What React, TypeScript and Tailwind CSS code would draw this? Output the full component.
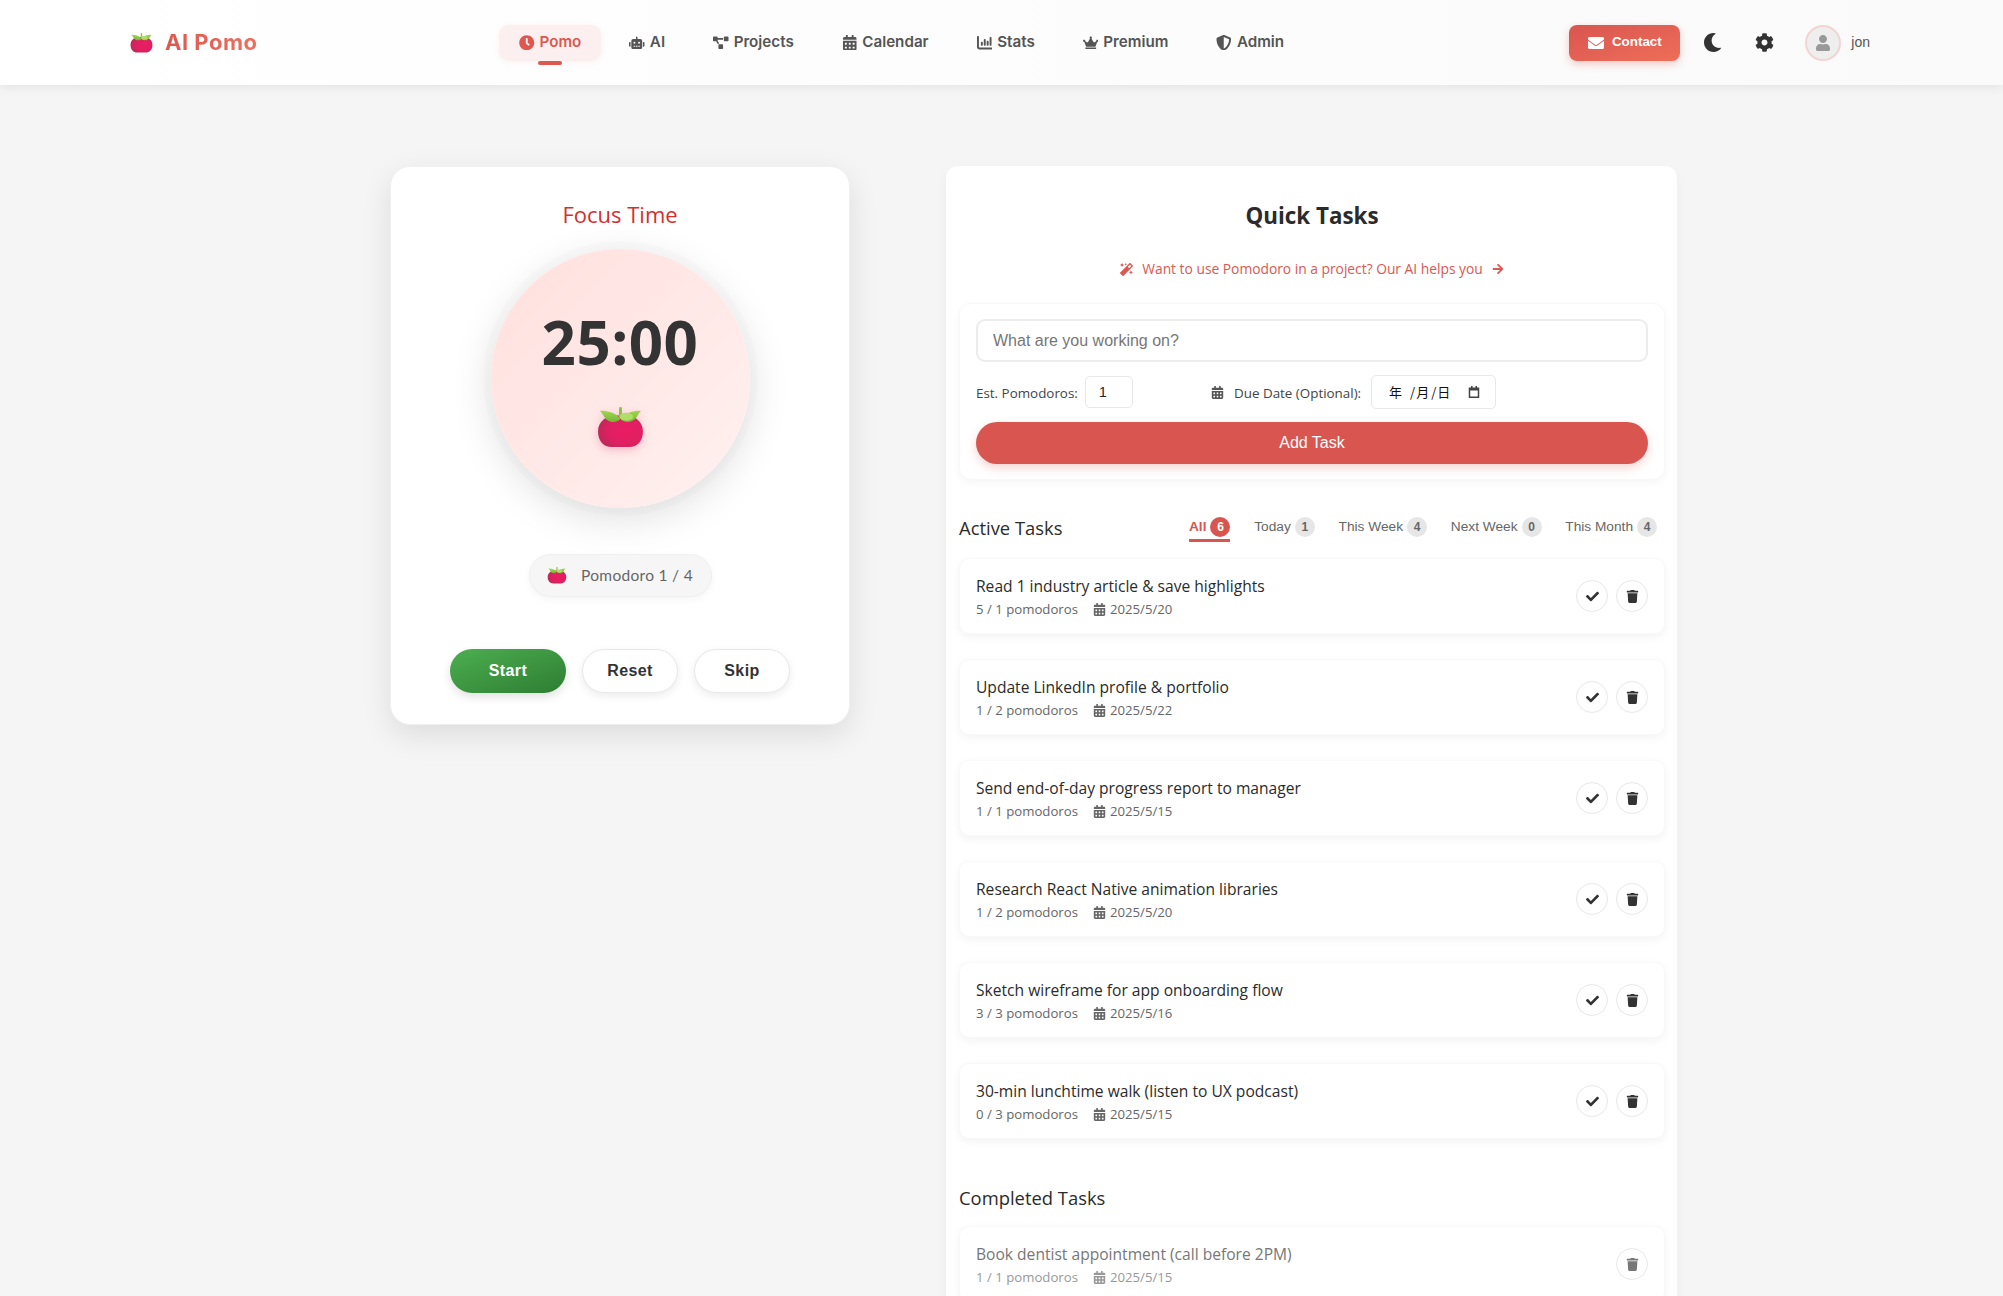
import { useId } from "react";
import {
  FaArrowRight,
  FaCalendarAlt,
  FaCheck,
  FaClock,
  FaCog,
  FaCrown,
  FaEnvelope,
  FaMagic,
  FaMoon,
  FaProjectDiagram,
  FaRobot,
  FaShieldAlt,
  FaTrash,
  FaUser,
} from "react-icons/fa";
import { FaChartColumn } from "react-icons/fa6";

const navItems = [
  { label: "Pomo", icon: FaClock, active: true },
  { label: "AI", icon: FaRobot },
  { label: "Projects", icon: FaProjectDiagram },
  { label: "Calendar", icon: FaCalendarAlt },
  { label: "Stats", icon: FaChartColumn },
  { label: "Premium", icon: FaCrown },
  { label: "Admin", icon: FaShieldAlt },
];

const tabs = [
  { label: "All", count: 6, active: true },
  { label: "Today", count: 1 },
  { label: "This Week", count: 4 },
  { label: "Next Week", count: 0 },
  { label: "This Month", count: 4 },
];

const tasks = [
  { title: "Read 1 industry article & save highlights", progress: "5 / 1 pomodoros", date: "2025/5/20" },
  { title: "Update LinkedIn profile & portfolio", progress: "1 / 2 pomodoros", date: "2025/5/22" },
  { title: "Send end-of-day progress report to manager", progress: "1 / 1 pomodoros", date: "2025/5/15" },
  { title: "Research React Native animation libraries", progress: "1 / 2 pomodoros", date: "2025/5/20" },
  { title: "Sketch wireframe for app onboarding flow", progress: "3 / 3 pomodoros", date: "2025/5/16" },
  { title: "30-min lunchtime walk (listen to UX podcast)", progress: "0 / 3 pomodoros", date: "2025/5/15" },
];

function Tomato({ className }: { className: string }) {
  const id = useId();
  return (
    <svg viewBox="0 0 48 42" className={className}>
      <defs>
        <radialGradient id={`${id}b`} cx="0.62" cy="0.5" r="0.65">
          <stop offset="0" stopColor="#ec1c62" />
          <stop offset="0.65" stopColor="#dd2061" />
          <stop offset="1" stopColor="#b92a58" />
        </radialGradient>
        <linearGradient id={`${id}l`} x1="0" y1="0" x2="0" y2="1">
          <stop offset="0" stopColor="#9fd84f" />
          <stop offset="1" stopColor="#74b536" />
        </linearGradient>
      </defs>
      <path
        d="M24 9C36 7 47 13 47 25C47 35 41 41 33 41H15C7 41 1 35 1 25C1 13 12 7 24 9Z"
        fill={`url(#${id}b)`}
      />
      <rect x="22.5" y="0" width="3" height="11" rx="1.5" fill="#86c440" />
      <path d="M3 4C9 3.5 18 5 24 12C20 17 11 16 8 11C6.5 8.5 5 6 3 4Z" fill={`url(#${id}l)`} />
      <path d="M45 4C39 3.5 30 5 24 12C28 17 37 16 40 11C41.5 8.5 43 6 45 4Z" fill={`url(#${id}l)`} />
      <ellipse cx="30" cy="10" rx="7" ry="4" fill="#aede68" />
    </svg>
  );
}

function TaskCard({ title, progress, date, done }: { title: string; progress: string; date: string; done?: boolean }) {
  return (
    <div className="flex h-[76px] items-center justify-between rounded-[10px] border border-[#f8f8f8] bg-white pl-[16px] pr-[16px] shadow-[0_3px_10px_rgba(0,0,0,0.05)]">
      <div className="flex flex-col pt-[3px]">
        <div className={`text-[15.6px] font-medium leading-[20px] ${done ? "text-[#777]" : "text-[#2b2b2b]"}`}>{title}</div>
        <div className={`mt-[3px] flex items-center text-[13.2px] leading-[20px] ${done ? "text-[#999]" : "text-[#666]"}`}>
          <span>{progress}</span>
          <FaCalendarAlt className="ml-[15px] mr-[4px] text-[13px]" />
          <span>{date}</span>
        </div>
      </div>
      <div className="flex gap-[8px]">
        {!done && (
          <button className="flex h-[32px] w-[32px] items-center justify-center rounded-full border border-[#e8e8e8] bg-white text-[13px] text-[#333]">
            <FaCheck />
          </button>
        )}
        <button className={`flex h-[32px] w-[32px] items-center justify-center rounded-full border border-[#e8e8e8] bg-white text-[13px] ${done ? "text-[#777]" : "text-[#333]"}`}>
          <FaTrash />
        </button>
      </div>
    </div>
  );
}

export default function App() {
  return (
    <div className="h-[1296px] overflow-hidden bg-[#f5f5f5] font-['Open_Sans',sans-serif]">
      <header className="flex h-[85px] items-center bg-gradient-to-r from-white to-[#fafafa] pl-[130px] pr-[133px] shadow-[0_2px_10px_rgba(0,0,0,0.08)]">
        <div className="flex w-[369px] items-center gap-[12px]">
          <Tomato className="h-[20px] w-[23px]" />
          <span className="bg-gradient-to-r from-[#dc5850] to-[#ee6f5c] bg-clip-text font-['Inter',sans-serif] text-[22px] font-bold tracking-[0.5px] text-transparent">
            AI Pomo
          </span>
        </div>
        <nav className="flex items-center gap-[8px] font-['Inter',sans-serif] text-[15.2px] font-semibold">
          {navItems.map(({ label, icon: Icon, active }) => (
            <a
              key={label}
              className={`relative flex h-[36px] items-center gap-[5px] rounded-[10px] px-[20px] ${
                active ? "bg-[#fbf0ef] text-[#dc5850] shadow-[0_1px_6px_rgba(217,85,80,0.08)]" : "text-[#555]"
              }`}
            >
              <Icon className="text-[15.5px]" />
              {label}
              {active && <span className="absolute bottom-[-4px] left-[39px] h-[4px] w-[24px] rounded-full bg-[#dc5850]" />}
            </a>
          ))}
        </nav>
        <div className="ml-auto flex items-center">
          <button className="flex h-[36px] w-[111px] items-center justify-center gap-[8px] rounded-[8px] bg-gradient-to-br from-[#d95550] to-[#ee6e58] font-['Liberation_Sans',sans-serif] text-[13.4px] font-bold text-white shadow-[0_3px_8px_rgba(217,85,80,0.3)]">
            <FaEnvelope className="text-[16px]" />
            Contact
          </button>
          <FaMoon className="ml-[23px] text-[19px] text-[#333]" />
          <FaCog className="ml-[33px] text-[19px] text-[#333]" />
          <div className="ml-[31px] flex h-[36px] w-[36px] items-center justify-center overflow-hidden rounded-full border-2 border-[#f2d5d3] bg-[#eee] text-[16px] text-[#999]">
            <FaUser />
          </div>
          <span className="ml-[10px] font-['Liberation_Sans',sans-serif] text-[14px] text-[#555]">jon</span>
        </div>
      </header>

      <main className="flex items-start gap-[96px] pl-[390px] pt-[81px]">
        <section className="flex h-[559px] w-[460px] flex-col items-center rounded-[20px] border border-[#f0f0f0] bg-white shadow-[0_10px_30px_rgba(0,0,0,0.1)]">
          <h2 className="mt-[31px] text-[22px] font-medium leading-[32px] text-[#d32f2f]">Focus Time</h2>
          <div className="mt-[19px] flex h-[259px] w-[259px] flex-col items-center rounded-full bg-gradient-to-br from-[#ffe0de] to-[#fff1f0] shadow-[0_0_0_8px_rgba(0,0,0,0.01),0_10px_40px_rgba(0,0,0,0.13)]">
            <div className="mt-[53px] text-[60px] font-bold leading-[80px] tracking-[0.5px] text-[#333]">25:00</div>
            <Tomato className="mt-[25px] h-[41px] w-[47px] drop-shadow-[0_3px_4px_rgba(200,30,90,0.25)]" />
          </div>
          <div className="mt-[46px] flex h-[43px] w-[183px] items-center justify-center gap-[14px] rounded-full border border-[#efefef] bg-[#f6f6f6] text-[15.5px] text-[#666] shadow-[0_3px_8px_rgba(0,0,0,0.04)]">
            <Tomato className="h-[17px] w-[20px]" />
            <span className="font-['Lato',sans-serif] tracking-[0.3px]">Pomodoro 1 / 4</span>
          </div>
          <div className="mt-[52px] flex items-center gap-[16px] font-['Liberation_Sans',sans-serif] text-[16px] font-bold tracking-[0.4px]">
            <button className="h-[44px] w-[116px] rounded-full bg-gradient-to-br from-[#4caf50] to-[#2e7d32] text-white shadow-[0_4px_10px_rgba(0,0,0,0.12)]">Start</button>
            <button className="h-[44px] w-[96px] rounded-full border border-[#e8e8e8] bg-white text-[#333] shadow-[0_3px_8px_rgba(0,0,0,0.08)]">Reset</button>
            <button className="h-[44px] w-[96px] rounded-full border border-[#e8e8e8] bg-white text-[#333] shadow-[0_3px_8px_rgba(0,0,0,0.08)]">Skip</button>
          </div>
        </section>

        <section className="flex h-[1400px] w-[731px] flex-col rounded-[12px] bg-white pl-[13px] pr-[12px] shadow-[0_4px_12px_rgba(0,0,0,0.04)]">
          <h2 className="mt-[33px] text-center text-[22.4px] font-bold leading-[34px] text-[#2b2b2b]">Quick Tasks</h2>
          <div className="mt-[26px] flex items-center justify-center text-[13.8px] leading-[20px] text-[#dc5850]">
            <FaMagic className="mr-[9px] text-[13px]" />
            <span>Want to use Pomodoro in a project? Our AI helps you</span>
            <FaArrowRight className="ml-[9px] text-[12px]" />
          </div>
          <div className="mt-[24px] flex h-[177px] flex-col rounded-[12px] border border-[#f8f8f8] bg-white px-[16px] pt-[15px] shadow-[0_3px_10px_rgba(0,0,0,0.04)]">
            <div className="flex h-[43px] items-center rounded-[9px] border-2 border-[#ececec] px-[15px] font-['Liberation_Sans',sans-serif] text-[16px] text-[#777]">
              What are you working on?
            </div>
            <div className="mt-[13px] flex h-[34px] items-center text-[13.4px] text-[#444]">
              <span className="w-[109px] pt-[2px]">Est. Pomodoros:</span>
              <div className="flex h-[32px] w-[48px] items-center rounded-[5px] border border-[#e8e8e8] pl-[13px] font-['Liberation_Sans',sans-serif] text-[14px] text-[#222]">1</div>
              <FaCalendarAlt className="ml-[78px] mr-[10px] text-[13px] text-[#555]" />
              <span className="w-[137px] pt-[2px]">Due Date (Optional):</span>
              <div className="flex h-[34px] w-[125px] items-center rounded-[5px] border border-[#e8e8e8] pl-[17px] font-['Noto_Sans_CJK_SC',sans-serif] text-[13px] text-[#111]">
                <span>年</span>
                <span className="ml-[8px]">/</span>
                <span className="ml-[1px]">月</span>
                <span className="ml-[2px]">/</span>
                <span className="ml-[1px]">日</span>
                <svg viewBox="0 0 16 18" className="ml-[18px] h-[14px] w-[12px]" fill="#444">
                  <path d="M1 3h3V1h2v2h4V1h2v2h3v14H1zM3 7v8h10V7z" />
                </svg>
              </div>
            </div>
            <button className="mt-[13px] h-[42px] rounded-full bg-[#d95550] font-['Liberation_Sans',sans-serif] text-[16px] text-white shadow-[0_4px_10px_rgba(217,85,80,0.25)]">
              Add Task
            </button>
          </div>

          <div className="mt-[31px] flex h-[32px] items-start justify-between pr-[8px]">
            <h3 className="text-[18.4px] font-medium leading-[34px] text-[#2b2b2b]">Active Tasks</h3>
            <div className="mt-[6px] flex gap-[23.8px] font-['Liberation_Sans',sans-serif] text-[13.7px]">
              {tabs.map((t) => (
                <div key={t.label} className={`flex h-[25px] items-start gap-[4px] ${t.active ? "border-b-[3px] border-[#d95550] font-bold text-[#d95550]" : "text-[#666]"}`}>
                  <span className="leading-[20px]">{t.label}</span>
                  <span className={`flex h-[20px] w-[20px] items-center justify-center rounded-full text-[12px] font-bold ${t.active ? "bg-[#d95550] text-white" : "bg-[#e6e6e6] text-[#666]"}`}>
                    {t.count}
                  </span>
                </div>
              ))}
            </div>
          </div>

          <div className="mt-[15px] flex flex-col gap-[25px]">
            {tasks.map((t) => (
              <TaskCard key={t.title} {...t} />
            ))}
          </div>

          <h3 className="mt-[47px] text-[18.4px] font-medium leading-[24px] text-[#2b2b2b]">Completed Tasks</h3>
          <div className="mt-[16px]">
            <TaskCard title="Book dentist appointment (call before 2PM)" progress="1 / 1 pomodoros" date="2025/5/15" done />
          </div>
        </section>
      </main>
    </div>
  );
}
